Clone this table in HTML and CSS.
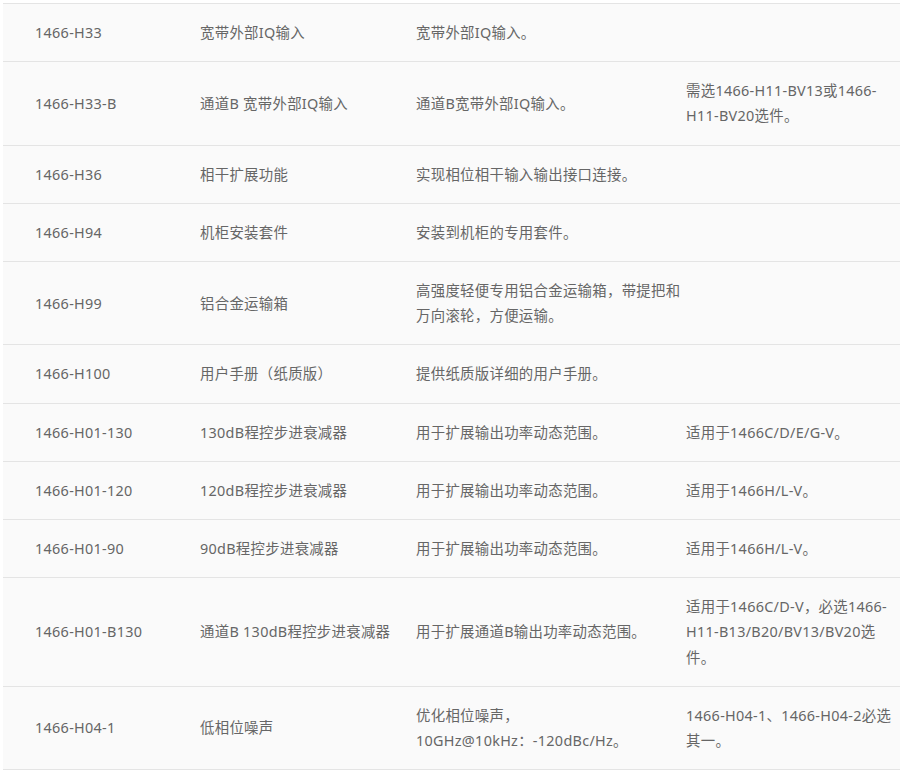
FILE: index.html
```html
<!DOCTYPE html>
<html lang="zh-CN">
<head>
<meta charset="utf-8">
<title>选件</title>
<link rel="stylesheet" href="styles.css">
</head>
<body>
<div class="wrap">
<table class="opts">
<colgroup>
<col class="c1"><col class="c2"><col class="c3"><col class="c4">
</colgroup>
<tbody>
<tr><td>1466-H33</td><td>宽带外部IQ输入</td><td>宽带外部IQ输入。</td><td></td></tr>
<tr><td>1466-H33-B</td><td>通道B 宽带外部IQ输入</td><td>通道B宽带外部IQ输入。</td><td>需选1466-H11-BV13或1466-H11-BV20选件。</td></tr>
<tr><td>1466-H36</td><td>相干扩展功能</td><td>实现相位相干输入输出接口连接。</td><td></td></tr>
<tr><td>1466-H94</td><td>机柜安装套件</td><td>安装到机柜的专用套件。</td><td></td></tr>
<tr><td>1466-H99</td><td>铝合金运输箱</td><td>高强度轻便专用铝合金运输箱，带提把和万向滚轮，方便运输。</td><td></td></tr>
<tr><td>1466-H100</td><td>用户手册（纸质版）</td><td>提供纸质版详细的用户手册。</td><td></td></tr>
<tr><td>1466-H01-130</td><td>130dB程控步进衰减器</td><td>用于扩展输出功率动态范围。</td><td>适用于1466C/D/E/G-V。</td></tr>
<tr><td>1466-H01-120</td><td>120dB程控步进衰减器</td><td>用于扩展输出功率动态范围。</td><td>适用于1466H/L-V。</td></tr>
<tr><td>1466-H01-90</td><td>90dB程控步进衰减器</td><td>用于扩展输出功率动态范围。</td><td>适用于1466H/L-V。</td></tr>
<tr><td>1466-H01-B130</td><td>通道B 130dB程控步进衰减器</td><td>用于扩展通道B输出功率动态范围。</td><td>适用于1466C/D-V，必选1466-H11-B13/B20/BV13/BV20选件。</td></tr>
<tr><td>1466-H04-1</td><td>低相位噪声</td><td>优化相位噪声，<br>10GHz@10kHz：-120dBc/Hz。</td><td>1466-H04-1、1466-H04-2必选其一。</td></tr>
</tbody>
</table>
</div>
</body>
</html>
```
FILE: styles.css
```css
html, body {
  margin: 0;
  padding: 0;
  background: #ffffff;
  overflow: hidden;
}
.wrap {
  padding: 3px 0 0 3px;
  width: 910px;
  overflow: hidden;
}
.opts {
  border-collapse: collapse;
  table-layout: fixed;
  width: 902px;
  background: #fafafa;
  font-family: "Noto Sans", "Noto Sans CJK SC", sans-serif;
  font-size: 14.4px;
  line-height: 25.2px;
  letter-spacing: 0.3px;
  color: #666666;
}
.c1 { width: 197px; }
.c2 { width: 216px; }
.c3 { width: 270px; }
.c4 { width: 219px; }
.opts td {
  border-top: 1px solid #e4e4e4;
  border-bottom: 1px solid #e4e4e4;
  padding: 16px 5px 16px 0;
  vertical-align: middle;
  text-align: left;
  word-break: normal;
}
.opts td:first-child {
  padding-left: 32px;
}
```
